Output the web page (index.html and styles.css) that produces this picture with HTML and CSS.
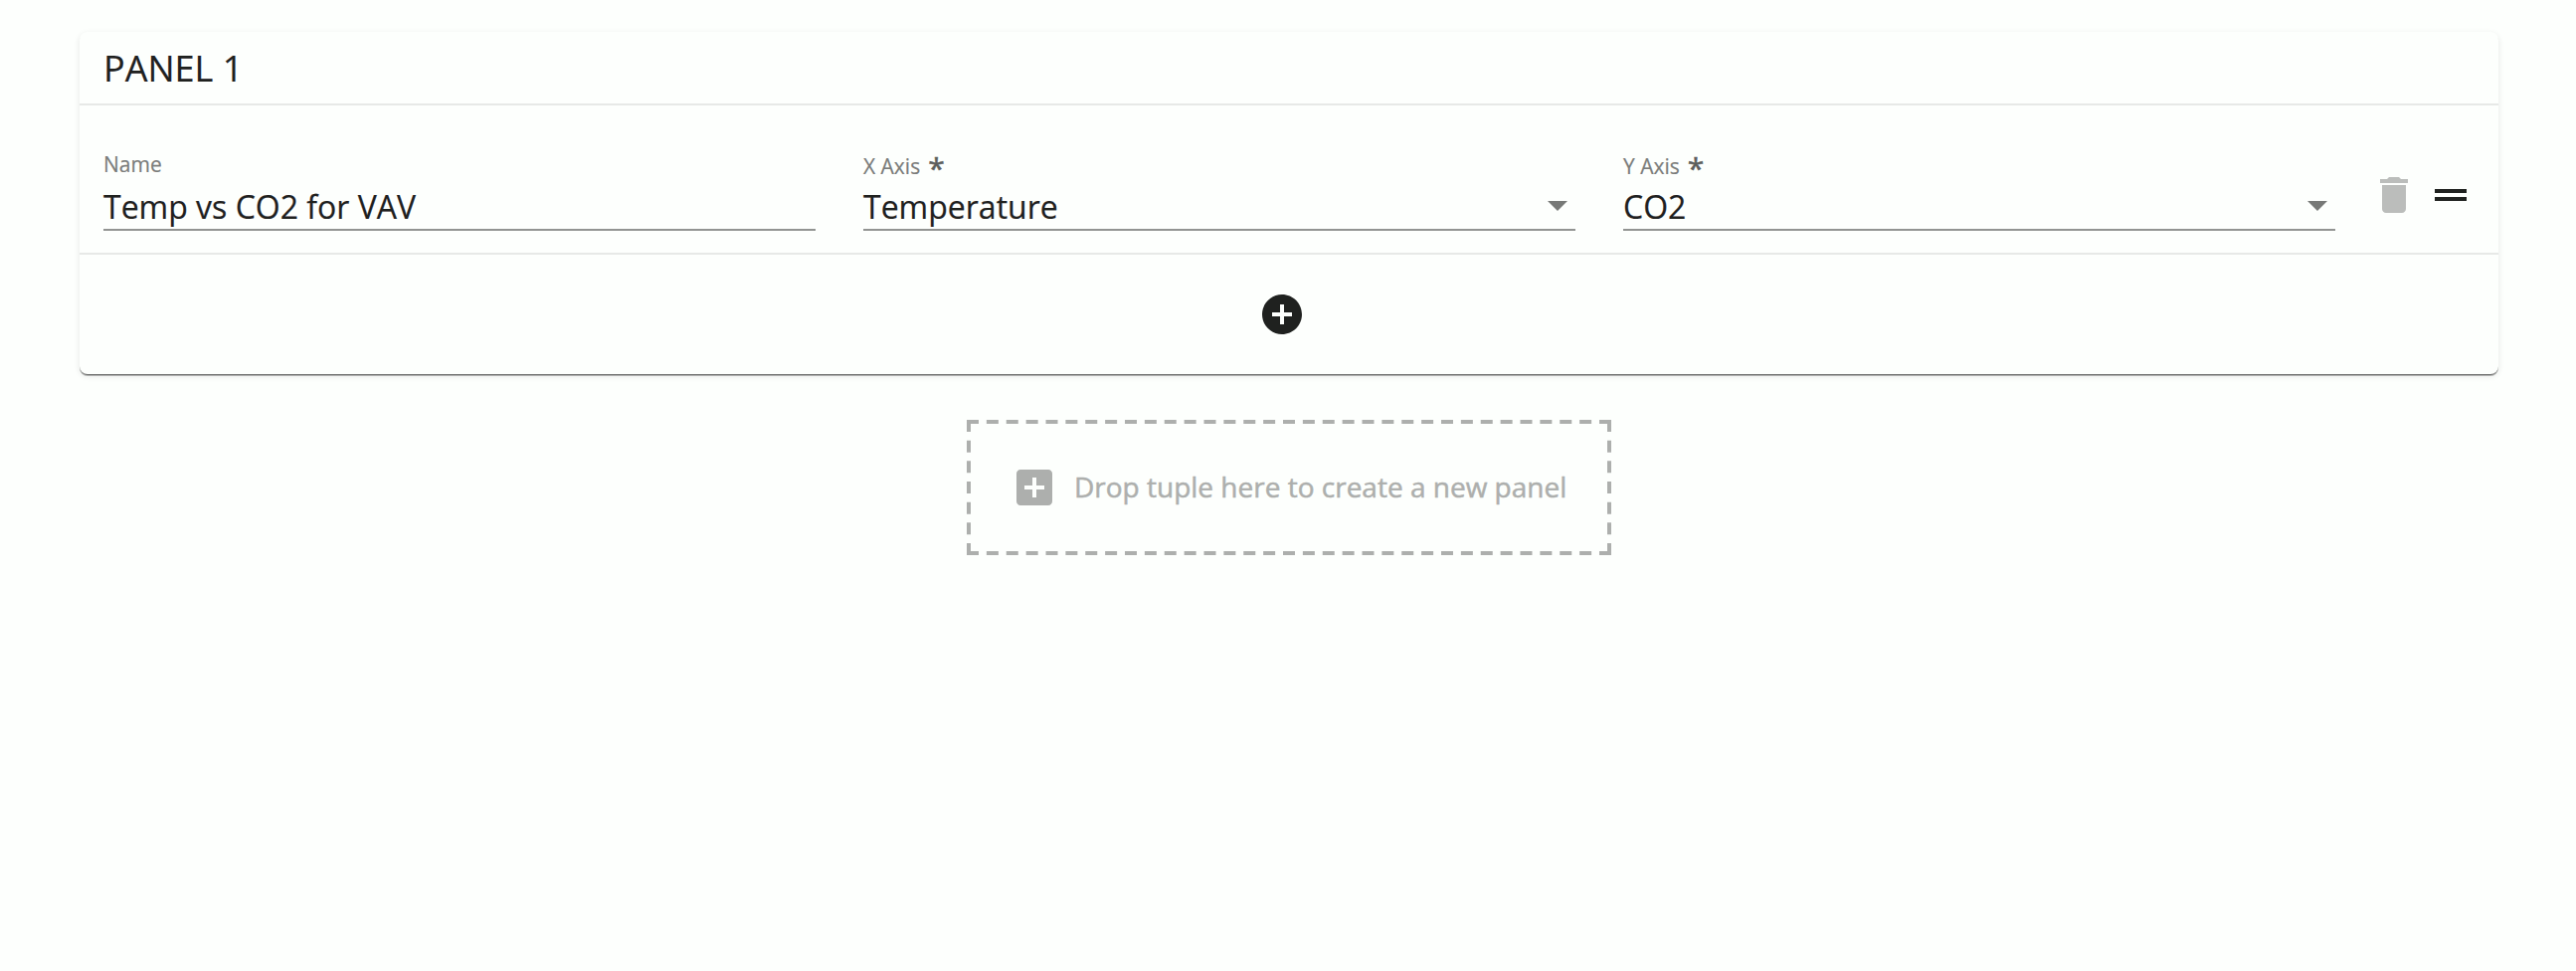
FILE: index.html
```html
<!DOCTYPE html>
<html lang="en">
<head>
<meta charset="utf-8">
<title>Panels</title>
<link rel="stylesheet" href="styles.css">
</head>
<body>
<main class="page">
  <section class="card">
    <header class="card-header">PANEL 1</header>
    <div class="tuple">
      <div class="field">
        <div class="label">Name</div>
        <div class="control"><span class="value">Temp vs CO2 for VAV</span></div>
      </div>
      <div class="field">
        <div class="label label-select">X Axis<span class="required">*</span></div>
        <div class="control"><span class="value">Temperature</span><svg class="arrow" viewBox="0 0 20 10"><path d="M0 0h20L10 10z"/></svg></div>
      </div>
      <div class="field">
        <div class="label label-select">Y Axis<span class="required">*</span></div>
        <div class="control"><span class="value">CO2</span><svg class="arrow" viewBox="0 0 20 10"><path d="M0 0h20L10 10z"/></svg></div>
      </div>
      <div class="actions">
        <svg class="icon icon-delete" viewBox="0 0 24 24"><path d="M6 19c0 1.100.9 2 2 2h8c1.100 0 2-.9 2-2V7H6v12zM19 4h-3.500l-1-1h-5l-1 1H5v2h14V4z"/></svg>
        <svg class="icon" viewBox="0 0 24 24"><path d="M20 9H4v2h16V9zM4 15h16v-2H4v2z"/></svg>
      </div>
    </div>
    <div class="card-footer">
      <svg class="icon" viewBox="0 0 24 24"><path d="M12 2C6.480 2 2 6.480 2 12s4.480 10 10 10 10-4.480 10-10S17.520 2 12 2zm5 11h-4v4h-2v-4H7v-2h4V7h2v4h4v2z"/></svg>
    </div>
  </section>
  <div class="dropzone">
    <svg class="dash" viewBox="0 0 648 136">
      <path class="dash-h" d="M0 2H648M0 134H648"/>
      <path class="dash-v" d="M2 0V136M646 0V136"/>
    </svg>
    <svg class="icon icon-add" viewBox="0 0 24 24"><path d="M19 3H5c-1.110 0-2 .9-2 2v14c0 1.100.89 2 2 2h14c1.100 0 2-.9 2-2V5c0-1.100-.9-2-2-2zm-2 10h-4v4h-2v-4H7v-2h4V7h2v4h4v2z"/></svg>
    <span class="drop-text">Drop tuple here to create a new panel</span>
  </div>
</main>
</body>
</html>
```
FILE: styles.css
```css
* { box-sizing: border-box; }
body {
  margin: 0;
  min-height: 976px;
  background: #fdfffd;
  color: #1f211f;
  font-family: "Open Sans", sans-serif;
  -webkit-text-stroke: 0.2px currentColor;
}
.page {
  display: flex;
  flex-direction: column;
  align-items: center;
  gap: 46px;
  padding: 32px 78px 0 80px;
}
.card {
  width: 100%;
  height: 344px;
  border-radius: 8px;
  background: #fdfffd;
  box-shadow: 0 2px 1px -1px rgba(0,0,0,.4), 0 2px 0 0 rgba(0,0,0,.24), 0 2px 6px rgba(0,0,0,.1);
}
.card-header {
  height: 74px;
  padding-left: 24px;
  border-bottom: 2px solid #e7e9e7;
  font-size: 36px;
  line-height: 74px;
}
.tuple {
  display: flex;
  gap: 48px;
  height: 150px;
  padding: 0 24px;
  border-bottom: 2px solid #e7e9e7;
}
.field {
  width: 716px;
  padding-top: 44px;
}
.label {
  height: 30px;
  color: #7b7d7b;
  font-size: 21px;
  line-height: 30px;
  white-space: nowrap;
}
.label-select {
  position: relative;
  top: 2px;
}
.required {
  display: inline-block;
  margin-left: 8px;
  color: #5c5e5c;
  font-size: 30px;
  line-height: 20px;
  transform: translateY(5px);
  -webkit-text-stroke-width: 0.6px;
}
.control {
  display: flex;
  align-items: center;
  justify-content: space-between;
  height: 52px;
  padding-right: 8px;
  border-bottom: 2px solid #929492;
}
.value {
  padding-top: 6px;
  font-size: 32px;
  line-height: 44px;
  white-space: nowrap;
}
.arrow {
  width: 20px;
  height: 10px;
  margin-top: 4px;
  fill: #777977;
}
.actions {
  display: flex;
  gap: 9px;
  margin-left: -13px;
  padding-top: 66px;
}
.icon {
  flex: none;
  width: 48px;
  height: 48px;
  fill: #1f211f;
}
.icon-delete { fill: #bbbdbb; }
.card-footer {
  display: flex;
  align-items: center;
  justify-content: center;
  height: 120px;
  padding-right: 14px;
}
.dropzone {
  position: relative;
  display: flex;
  align-items: center;
  gap: 16px;
  width: 648px;
  height: 136px;
  padding: 0 44px;
  color: #adafad;
}
.dash {
  position: absolute;
  inset: 0;
  width: 648px;
  height: 136px;
  fill: none;
  stroke: #adafad;
  stroke-width: 4;
}
.dash-h { stroke-dasharray: 12 7.875; }
.dash-v { stroke-dasharray: 12 8.667; }
.icon-add { fill: #adafad; }
.drop-text {
  padding-bottom: 2px;
  font-size: 28px;
  line-height: 40px;
  white-space: nowrap;
  -webkit-text-stroke-width: 0.5px;
}
```
